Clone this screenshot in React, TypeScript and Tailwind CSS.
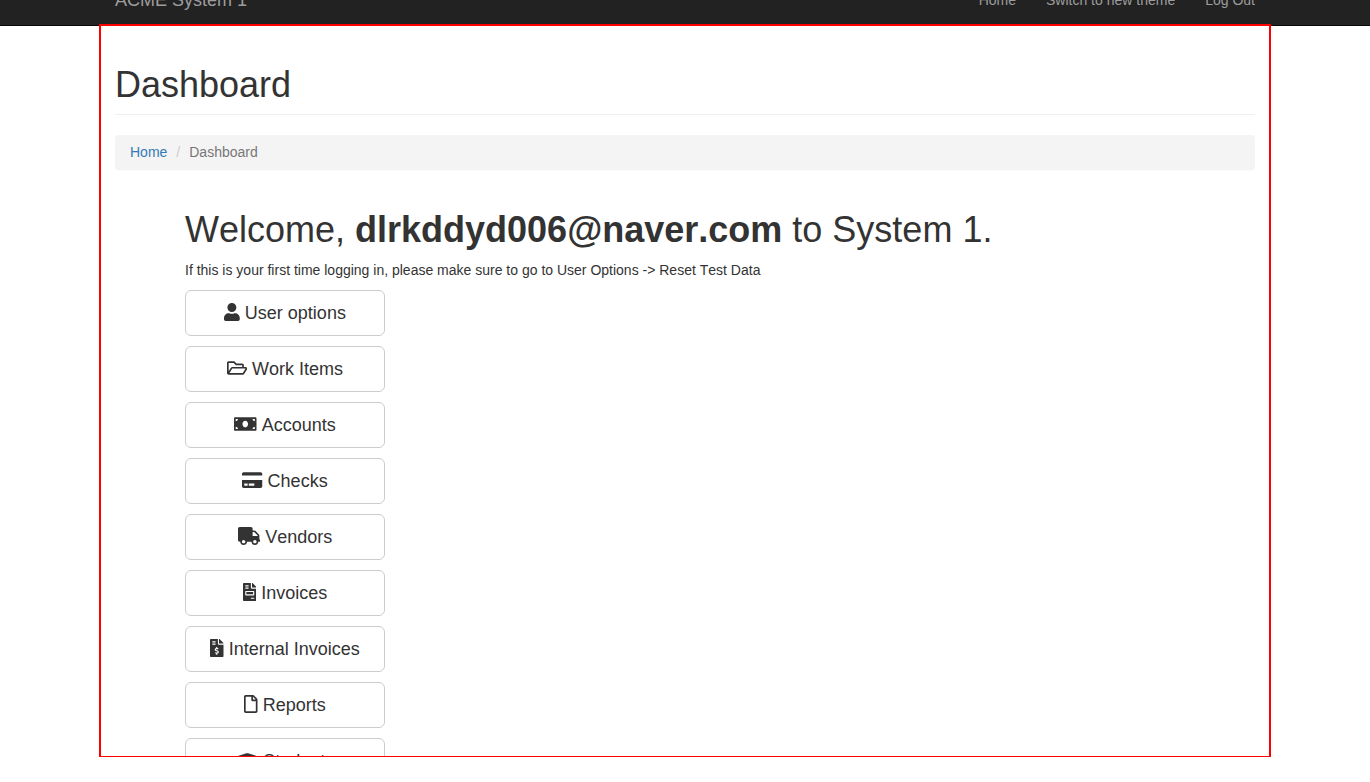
import type { IconType } from "react-icons";
import {
  FaUser,
  FaRegFolderOpen,
  FaMoneyBill,
  FaCreditCard,
  FaTruck,
  FaFileInvoice,
  FaFileInvoiceDollar,
  FaRegFile,
  FaGraduationCap,
} from "react-icons/fa";

const items: { label: string; Icon: IconType; width: string }[] = [
  { label: "User options", Icon: FaUser, width: "w-[15.75px]" },
  { label: "Work Items", Icon: FaRegFolderOpen, width: "w-[20.25px]" },
  { label: "Accounts", Icon: FaMoneyBill, width: "w-[22.5px]" },
  { label: "Checks", Icon: FaCreditCard, width: "w-[20.25px]" },
  { label: "Vendors", Icon: FaTruck, width: "w-[22.5px]" },
  { label: "Invoices", Icon: FaFileInvoice, width: "w-[13.5px]" },
  { label: "Internal Invoices", Icon: FaFileInvoiceDollar, width: "w-[13.5px]" },
  { label: "Reports", Icon: FaRegFile, width: "w-[13.5px]" },
  { label: "Students", Icon: FaGraduationCap, width: "w-[22.5px]" },
];

function Navbar() {
  return (
    <header className="flex h-[26px] flex-col justify-end overflow-hidden border-b border-[#080808] bg-[#222]">
      <nav className="mx-auto flex h-[50px] w-[1140px] shrink-0 items-center justify-between text-[#9d9d9d]">
        <a href="#" className="text-[18px] leading-5">ACME System 1</a>
        <div className="flex gap-[30px] text-sm leading-5">
          <a href="#">Home</a>
          <a href="#">Switch to new theme</a>
          <a href="#">Log Out</a>
        </div>
      </nav>
    </header>
  );
}

export default function App() {
  return (
    <div className="h-[782px] overflow-hidden bg-white font-['Liberation_Sans',Arial,sans-serif] text-sm leading-5 text-[#333] [font-kerning:none]">
      <Navbar />
      <main className="relative -mt-[2px] ml-[99px] h-[733px] w-[1172px] overflow-hidden border-2 border-b border-[#f00] bg-white px-[14px] pt-[39px]">
        <div className="h-[50px] border-b border-[#eee]">
          <h1 className="text-[36px] leading-[39.6px]">Dashboard</h1>
        </div>
        <div className="mt-5 flex h-9 items-start rounded border-b border-[#fafafa] bg-[#f4f4f4] px-[15px] pt-[7px]">
          <a href="#" className="text-[#337ab7]">Home</a>
          <span className="pr-[5px] pl-[9px] text-[#ccc]">/</span>
          <span className="pl-1 text-[#777]">Dashboard</span>
        </div>
        <section className="pt-[39px] pl-[70px]">
          <h1 className="mb-[10px] h-10 text-[36px] leading-[39.6px]">
            Welcome, <b>dlrkddyd006@naver.com</b> to System 1.
          </h1>
          <p className="mb-[10px]">
            If this is your first time logging in, please make sure to go to User Options -&gt; Reset Test Data
          </p>
          <div className="flex w-[200px] flex-col gap-[10px]">
            {items.map(({ label, Icon, width }) => (
              <button
                key={label}
                className="flex h-[46px] items-center justify-center gap-[5px] rounded-md border border-[#ccc] bg-white text-[18px] leading-6"
              >
                <Icon className={`${width} mb-[1.5px] h-[18px] shrink-0`} />
                <span>{label}</span>
              </button>
            ))}
          </div>
        </section>
      </main>
    </div>
  );
}
